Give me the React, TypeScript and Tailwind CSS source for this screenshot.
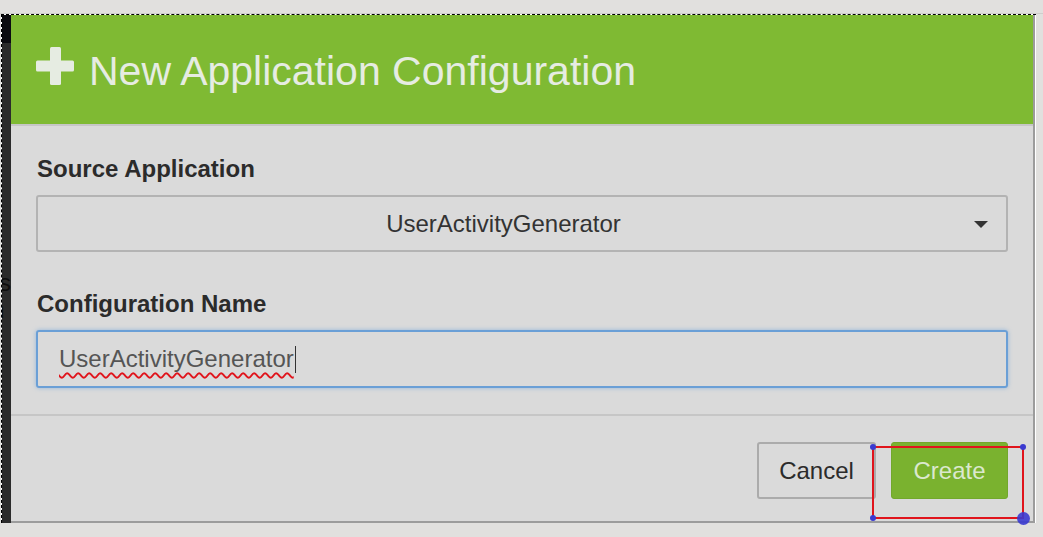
import React from 'react'

const FONT = { fontFamily: '"Liberation Sans", Arial, sans-serif' }

// ── Icône plus du titre ─────────────────────────────
function PlusIcon() {
  return (
    <svg width="38" height="38" viewBox="0 0 38 38" className="shrink-0 mb-[7px]">
      <rect x="14" y="0" width="11" height="38" rx="1.5" fill="#e6ece2" />
      <rect x="0" y="13.5" width="38" height="11" rx="1.5" fill="#e6ece2" />
    </svg>
  )
}

// ── Cadre de sélection (éditeur) ───────────────────
function SelectionBox() {
  return (
    <div className="absolute left-[872px] top-[446px] w-[152px] h-[73px] border-2 border-[#e0141c] pointer-events-none">
      <span className="absolute -left-[4px] -top-[4px] w-[6px] h-[6px] rounded-full bg-[#3a3ad0]" />
      <span className="absolute -right-[4px] -top-[4px] w-[6px] h-[6px] rounded-full bg-[#3a3ad0]" />
      <span className="absolute -left-[4px] -bottom-[4px] w-[6px] h-[6px] rounded-full bg-[#3a3ad0]" />
      <span className="absolute -right-[8px] -bottom-[8px] w-[13px] h-[13px] rounded-full bg-[#3a3ad0]/90" />
    </div>
  )
}

export default function App() {
  return (
    <div
      className="relative w-[1043px] h-[537px] overflow-hidden bg-[#e1e0de]"
      style={FONT}
    >
      <div className="h-[14px] border-b border-[#cfcecc]" />
      <div className="ml-[1px] w-[1035px] h-[509px] flex border-t border-l border-dashed border-black bg-white">
        {/* bande sombre de gauche */}
        <div className="w-[9px] bg-[#2b2b2b] flex flex-col overflow-hidden">
          <div className="h-[28px] bg-[#0b0b10]" />
          <div className="mt-[226px] text-[24px] leading-[28px] text-[#0e0e0e] -ml-[3px]">s</div>
          <div className="-mt-[1px] text-[24px] leading-[28px] text-[#0e0e0e] -ml-[11px]">n</div>
        </div>

        {/* boîte de dialogue */}
        <div className="flex-1 flex flex-col bg-[#dadada] border-r-2 border-b-2 border-[#9c9c9c] mr-[1px]">
          <div className="h-[111px] bg-[#7fba33] border-b-2 border-[#c6c6c6] flex items-center pl-[25px] gap-[15px]">
            <PlusIcon />
            <h1 className="text-[41px] leading-none text-[#e6ece2] pt-[3px]">
              New Application Configuration
            </h1>
          </div>

          <div className="flex flex-col px-[25px] pt-[28px] pb-[26px] border-b-2 border-[#c6c6c6]">
            <label className="pl-[1px] text-[24px] leading-[29px] font-bold text-[#2b2b2b]">
              Source Application
            </label>
            <div className="mt-[12px] h-[57px] rounded-[3px] border-2 border-[#b3b3b3] flex items-center relative pr-[37px]">
              <span className="flex-1 text-center text-[24px] text-[#333]">UserActivityGenerator</span>
              <svg width="14" height="7" viewBox="0 0 14 7" className="absolute right-[18px] top-[24px]">
                <path d="M0 0 H14 L7 7 Z" fill="#333" />
              </svg>
            </div>

            <label className="mt-[37px] pl-[1px] text-[24px] leading-[29px] font-bold text-[#2b2b2b]">
              Configuration Name
            </label>
            <div className="mt-[12px] h-[58px] rounded-[3px] border-2 border-[#6a9fd6] shadow-[0_0_4px_rgba(102,160,220,0.6)] flex items-center pl-[21px]">
              <span className="text-[24px] text-[#555] underline decoration-wavy decoration-[#e0141c] decoration-[1.5px] underline-offset-[5px]">
                UserActivityGenerator
              </span>
              <span className="ml-[1px] w-[1px] h-[27px] bg-[#333]" />
            </div>
          </div>

          <div className="flex justify-end gap-[15px] px-[25px] pt-[26px]">
            <button className="w-[119px] h-[57px] rounded-[3px] border-2 border-[#ababab] bg-[#dadada] text-[24px] text-[#2b2b2b]">
              Cancel
            </button>
            <button className="w-[117px] h-[57px] rounded-[3px] border border-[#72a82c] bg-[#7ab22f] text-[24px] text-[#dbe8cd]">
              Create
            </button>
          </div>
        </div>
      </div>

      <SelectionBox />
    </div>
  )
}
